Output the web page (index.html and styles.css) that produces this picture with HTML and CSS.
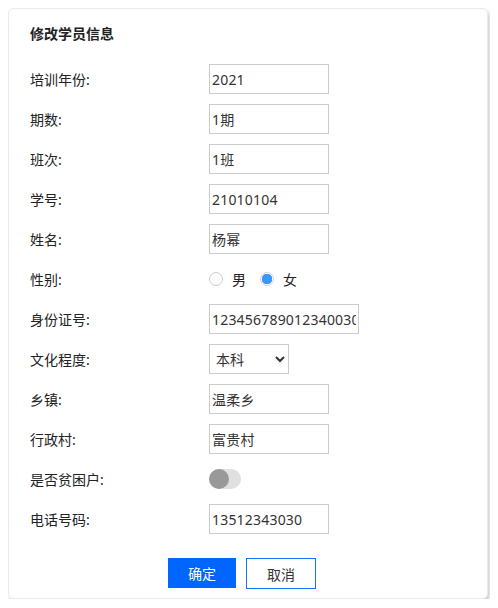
FILE: index.html
```html
<!DOCTYPE html>
<html lang="zh">
<head>
<meta charset="utf-8">
<link rel="stylesheet" href="styles.css">
</head>
<body>
<div class="card">
  <div class="title">修改学员信息</div>
  <div class="form">
    <div class="row"><label class="lbl">培训年份:</label><input class="inp" value="2021"></div>
    <div class="row"><label class="lbl">期数:</label><input class="inp" value="1期"></div>
    <div class="row"><label class="lbl">班次:</label><input class="inp" value="1班"></div>
    <div class="row"><label class="lbl">学号:</label><input class="inp" value="21010104"></div>
    <div class="row"><label class="lbl">姓名:</label><input class="inp" value="杨幂"></div>
    <div class="row"><label class="lbl">性别:</label>
      <div class="radios">
        <label class="radio"><input type="radio" name="sex"><span>男</span></label>
        <label class="radio"><input type="radio" name="sex" checked><span>女</span></label>
      </div>
    </div>
    <div class="row"><label class="lbl">身份证号:</label><input class="inp wide" value="123456789012340030"></div>
    <div class="row"><label class="lbl">文化程度:</label>
      <select class="sel"><option>本科</option></select>
    </div>
    <div class="row"><label class="lbl">乡镇:</label><input class="inp" value="温柔乡"></div>
    <div class="row"><label class="lbl">行政村:</label><input class="inp" value="富贵村"></div>
    <div class="row"><label class="lbl">是否贫困户:</label><span class="toggle"><span class="knob"></span></span></div>
    <div class="row"><label class="lbl">电话号码:</label><input class="inp" value="13512343030"></div>
  </div>
  <div class="actions">
    <button class="btn primary">确定</button>
    <button class="btn ghost">取消</button>
  </div>
</div>
</body>
</html>
```
FILE: styles.css
```css
* { box-sizing: border-box; }
body {
  margin: 8px;
  background: #fff;
  font-family: "Noto Sans", "Noto Sans CJK SC", sans-serif;
  color: #222;
}
.card {
  width: 480px;
  border: 1px solid #eaeaea;
  border-radius: 6px;
  box-shadow: 2px 3px 4px rgba(0,0,0,0.2);
  padding: 15px 20px 9px 21px;
}
.title {
  font-size: 14px;
  font-weight: bold;
  line-height: 20px;
  margin-bottom: 20px;
}
.form {
  display: flex;
  flex-direction: column;
  gap: 10px;
}
.row {
  display: flex;
  align-items: center;
  height: 30px;
}
.lbl {
  width: 179px;
  font-size: 14px;
}
.inp {
  width: 120px;
  height: 30px;
  border: 1px solid #ccc;
  padding: 0 2px;
  font-family: "Noto Sans", "Noto Sans CJK SC", sans-serif;
  font-size: 14px;
  letter-spacing: 0.2px;
  color: #333;
  outline: none;
}
.inp.wide { width: 150px; }
.radios {
  display: flex;
  align-items: center;
  gap: 14px;
}
.radio {
  display: flex;
  align-items: center;
  font-size: 14px;
}
.radio input {
  appearance: none;
  margin: 0 9px 0 0;
  width: 14px;
  height: 14px;
  border: 1px solid #ccc;
  border-radius: 50%;
  background: #fff;
}
.radio input:checked {
  border-color: #d4d4d4;
  background: radial-gradient(circle, #3b97ff 0 5px, #fff 5.5px);
}
.sel {
  width: 80px;
  height: 30px;
  border: 1px solid #ccc;
  border-radius: 0;
  background: #fff;
  font-family: "Noto Sans", "Noto Sans CJK SC", sans-serif;
  font-size: 14px;
  color: #333;
  padding: 0 2px;
}
.toggle {
  display: flex;
  width: 32px;
  height: 20px;
  border-radius: 10px;
  background: #e0e0e0;
}
.knob {
  width: 20px;
  height: 20px;
  border-radius: 50%;
  background: #999;
}
.actions {
  display: flex;
  gap: 10px;
  margin: 24px 0 0 138px;
}
.btn {
  height: 30px;
  font-family: "Noto Sans", "Noto Sans CJK SC", sans-serif;
  font-size: 14px;
  border-radius: 0;
  padding: 0;
}
.primary {
  width: 68px;
  background: #0066ff;
  color: #fff;
  border: none;
}
.ghost {
  width: 70px;
  height: 31px;
  background: #fff;
  color: #333;
  border: 1px solid #1a6fff;
}
```
